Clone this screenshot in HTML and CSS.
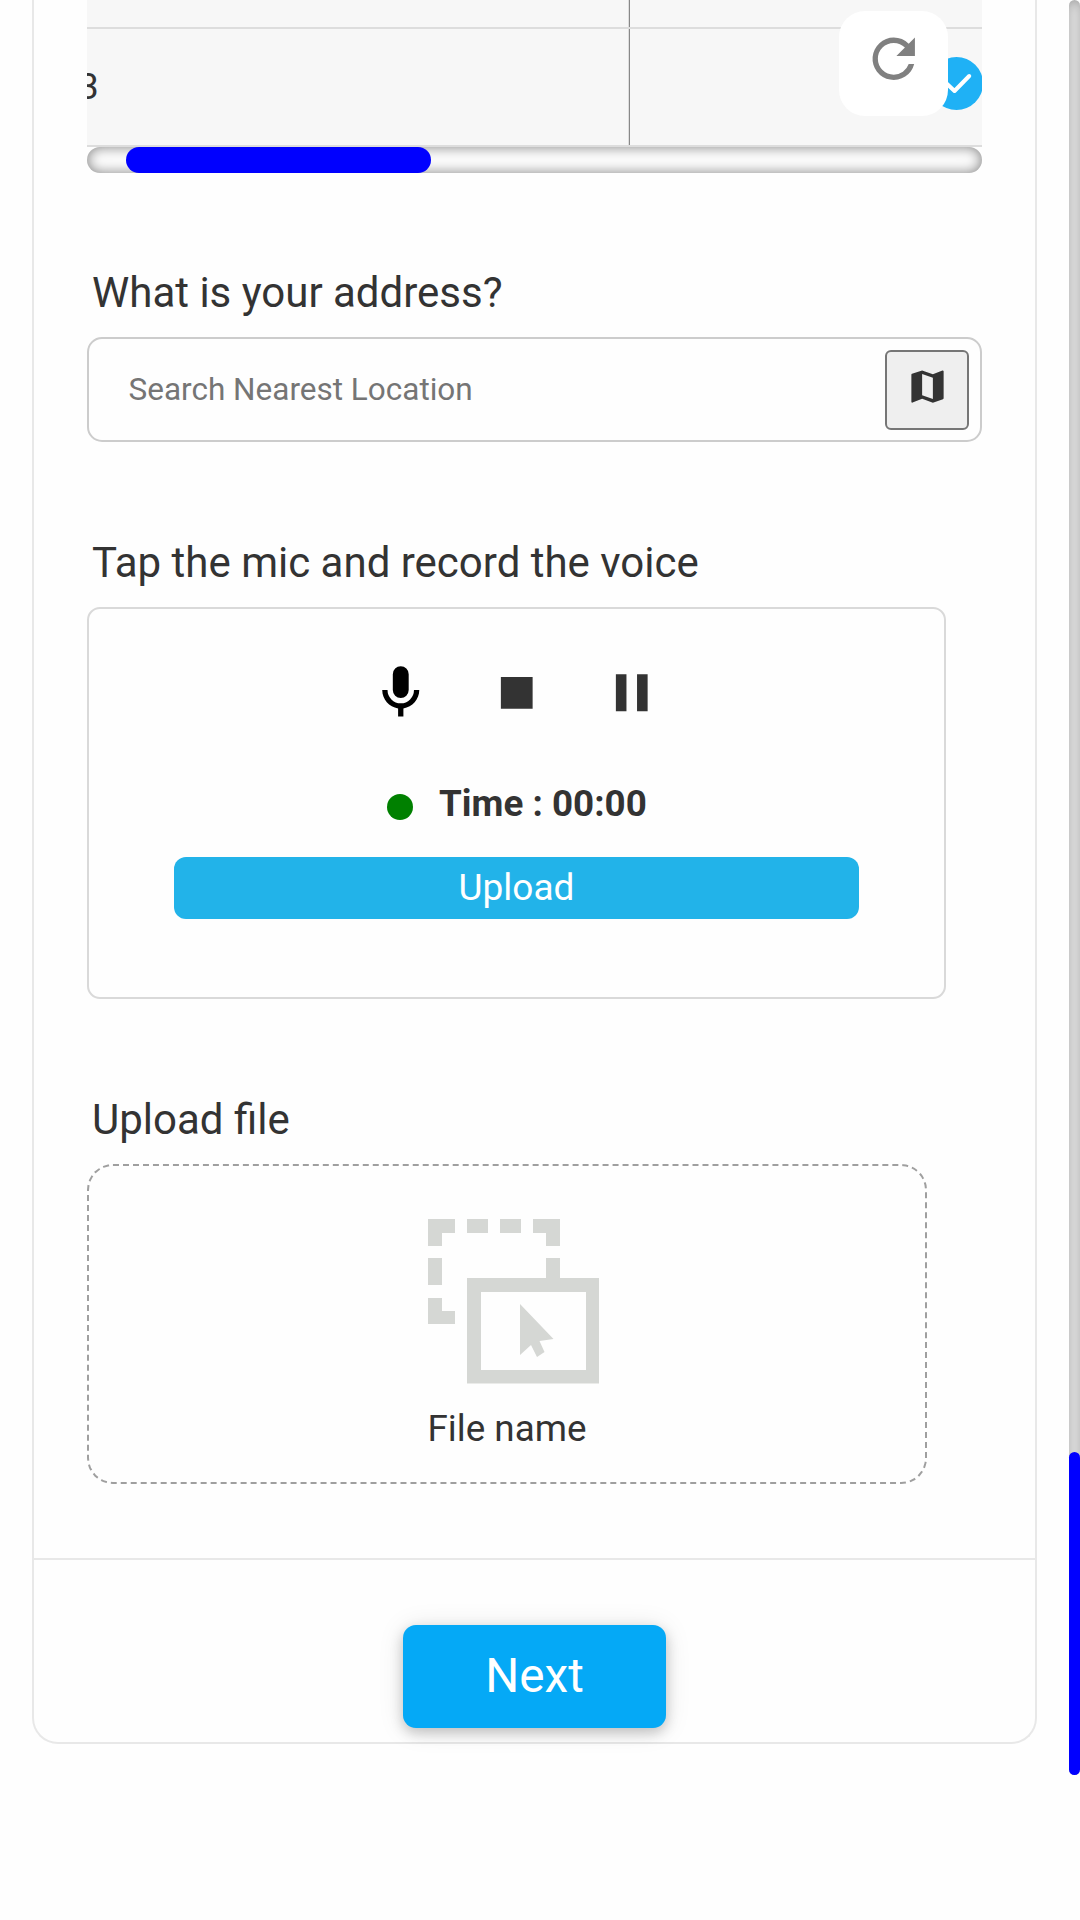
FILE: index.html
```html
<!DOCTYPE html>
<html lang="en">
<head>
<meta charset="utf-8">
<title>Form</title>
<link rel="stylesheet" href="styles.css">
</head>
<body>
<main class="card">
  <div class="fields">
    <div class="table">
      <div class="row row-cut"><div class="cell cell-first"></div><div class="cell"></div></div>
      <div class="row">
        <div class="cell cell-first"><span class="num">3</span></div>
        <div class="cell cell-check">
          <svg class="check" viewBox="0 0 53 53"><circle cx="26.5" cy="26.5" r="26.5" fill="#1fb1f5"/><path d="M15.5 25.5l9 8.5 14.700-15" fill="none" stroke="#fff" stroke-width="4" stroke-linecap="round" stroke-linejoin="round"/></svg>
        </div>
      </div>
      <button class="refresh" aria-label="Refresh">
        <svg viewBox="0 0 24 24"><path fill="#808080" d="M17.650 6.350A7.958 7.958 0 0 0 12 4a8 8 0 1 0 7.730 10h-2.080A5.990 5.990 0 0 1 12 18a6 6 0 1 1 0-12c1.660 0 3.140.690 4.220 1.780L13 11h7V4z"/></svg>
      </button>
    </div>
    <div class="hscroll"><div class="hthumb"></div></div>

    <label class="label label-first">What is your address?</label>
    <div class="search">
      <span class="placeholder">Search Nearest Location</span>
      <button class="map" aria-label="Map">
        <svg viewBox="0 0 24 24"><path fill="#333" d="M20.500 3l-.160.030L15 5.100 9 3 3.360 4.900c-.210.070-.360.250-.360.480V20.500c0 .280.220.500.500.500l.160-.030L9 18.900l6 2.100 5.640-1.900c.210-.070.360-.250.360-.480V3.500c0-.280-.220-.500-.500-.500zM15 19l-6-2.110V5l6 2.110V19z"/></svg>
      </button>
    </div>

    <label class="label">Tap the mic and record the voice</label>
    <div class="recorder">
      <div class="controls">
        <svg viewBox="0 0 24 24"><path d="M12 2a3 3 0 0 1 3 3v6a3 3 0 0 1-6 0V5a3 3 0 0 1 3-3zM19 11c0 3.530-2.610 6.440-6 6.930V21h-2v-3.070C7.610 17.440 5 14.530 5 11h2a5 5 0 0 0 10 0z"/></svg>
        <svg viewBox="0 0 24 24"><path fill="#333" d="M6 6h12v12H6z"/></svg>
        <svg viewBox="0 0 24 24"><path fill="#333" d="M6 5h4v14H6zM14 5h4v14h-4z"/></svg>
      </div>
      <div class="time"><span class="dot"></span><b class="clock">Time : 00:00</b></div>
      <button class="upload">Upload</button>
    </div>

    <label class="label">Upload file</label>
    <div class="drop">
      <svg class="drop-icon" viewBox="0 0 171 165" fill="#d5d7d4"><path d="M0 0h27v14H14v13H0zM39 0h21v14H39zM72 0h21v14H72zM105 0h27v27h-14V14h-13zM118 39h14v22h-14zM0 39h14v27H0zM0 79h14v13h13v13H0z"/><path fill-rule="evenodd" d="M39 59h132v105.500H39zM53 73v78h105V73z"/><path d="M92 85l33.500 35-14 2 5 11-7.500 5-6-12-11 10z"/></svg>
      <span class="file-name">File name</span>
    </div>
  </div>
  <footer class="footer"><button class="next">Next</button></footer>
</main>
<div class="vscroll"><div class="vthumb"></div></div>
</body>
</html>
```
FILE: styles.css
```css
* { box-sizing: border-box; }

body {
  margin: 0;
  height: 1920px;
  overflow: hidden;
  display: flex;
  justify-content: space-between;
  align-items: flex-start;
  background: #fefefe;
  color: #333;
  font-family: Roboto, "Liberation Sans", sans-serif;
}

button {
  margin: 0;
  padding: 0;
  border: 0;
  font-family: inherit;
}

svg { display: block; flex: none; }

.card {
  display: flex;
  flex-direction: column;
  width: 1005px;
  height: 1744px;
  margin-left: 32px;
  border: 2px solid #e8e8e8;
  border-top: 0;
  border-radius: 0 0 26px 26px;
}

.fields {
  display: flex;
  flex-direction: column;
  align-items: flex-start;
  height: 1558px;
  padding: 0 53px;
}

/* Table */
.table {
  position: relative;
  width: 895px;
  overflow: hidden;
  background: #f7f7f7;
}

.row {
  display: flex;
  height: 118px;
  border-bottom: 2px solid #ddd;
}

.row-cut { height: 29px; }
.cell { flex: 1; display: flex; align-items: center; }

.cell-first {
  flex: none;
  width: 543px;
  border-right: 1px solid #888;
  box-shadow: inset -1px 0 #ddd;
}

.num { margin: 0 0 2px -9px; font-size: 37px; }
.cell-check { justify-content: flex-end; padding-bottom: 7px; }
.check { width: 53px; height: 53px; margin-right: -1px; }

.refresh {
  position: absolute;
  top: 11px;
  right: 34px;
  display: flex;
  align-items: flex-start;
  width: 109px;
  height: 105px;
  padding: 16px 0 0 23px;
  border-radius: 26px;
  background: #fff;
}

.refresh svg { width: 63.500px; height: 63.500px; }

/* Scrollbars */
.hscroll {
  width: 895px;
  height: 26px;
  padding-left: 39px;
  border-radius: 13px;
  background: #fcfcfc;
  box-shadow: inset 0 0 13px #808080;
}

.hthumb {
  width: 305px;
  height: 26px;
  border-radius: 13px;
  background: #00f;
}

.vscroll {
  display: flex;
  align-items: flex-end;
  width: 11px;
  height: 1775px;
  border-radius: 6px;
  background: #fefefe;
  box-shadow: inset 0 0 13px #969696;
}

.vthumb {
  width: 11px;
  height: 323px;
  border-radius: 6px;
  background: #00f;
}

/* Fields */
.label {
  margin: 96px 0 19px 5px;
  font-size: 42px;
  line-height: 50px;
  white-space: nowrap;
}

.label-first { margin-top: 95px; }

.search {
  display: flex;
  align-items: center;
  justify-content: space-between;
  width: 895px;
  height: 105px;
  padding: 0 11px 0 39.500px;
  border: 2px solid #ccc;
  border-radius: 15px;
}

.placeholder { font-size: 31.500px; color: #757575; }

.map {
  display: flex;
  justify-content: center;
  width: 84px;
  height: 80px;
  padding-top: 13px;
  border: 2px solid #767676;
  border-radius: 6px;
  background: #efefef;
}

.map svg { width: 43px; height: 43px; }

.recorder {
  display: flex;
  flex-direction: column;
  align-items: center;
  width: 859px;
  height: 392px;
  padding-top: 51.500px;
  border: 2px solid #d9d9d9;
  border-radius: 13px;
}

.controls { display: flex; gap: 52px; }
.controls svg { width: 63.500px; height: 63.500px; }

.time {
  display: flex;
  align-items: center;
  width: 259px;
  height: 50px;
  margin-top: 55px;
}

.dot {
  width: 26px;
  height: 26px;
  flex: none;
  margin: 5px 26px 0 0;
  border-radius: 50%;
  background: green;
}

.clock { font-size: 36.800px; line-height: 50px; white-space: nowrap; }

.upload {
  width: 685px;
  height: 62px;
  margin-top: 28px;
  border-radius: 12px;
  background: #22b3e9;
  color: #fff;
  font-size: 37px;
  line-height: 62px;
}

.drop {
  display: flex;
  flex-direction: column;
  width: 840px;
  height: 320px;
  padding: 53px 0 0 339px;
  border: 2px dashed #9f9f9f;
  border-radius: 26px;
}

.drop-icon { width: 171px; height: 165px; }
.file-name { margin: 20px 0 0 -.500px; font-size: 36.800px; line-height: 50px; }

.footer {
  flex: 1;
  display: flex;
  justify-content: center;
  align-items: flex-start;
  border-top: 2px solid #e8e8e8;
  padding-top: 65px;
}

.next {
  width: 263px;
  height: 103px;
  border-radius: 13px;
  background: #05a9f6;
  box-shadow: 0 5px 13px rgba(0, 0, 0, .2), 0 2px 27px rgba(0, 0, 0, .1);
  color: #fff;
  font-size: 47.700px;
  line-height: 100px;
  padding-bottom: 2px;
}
```
